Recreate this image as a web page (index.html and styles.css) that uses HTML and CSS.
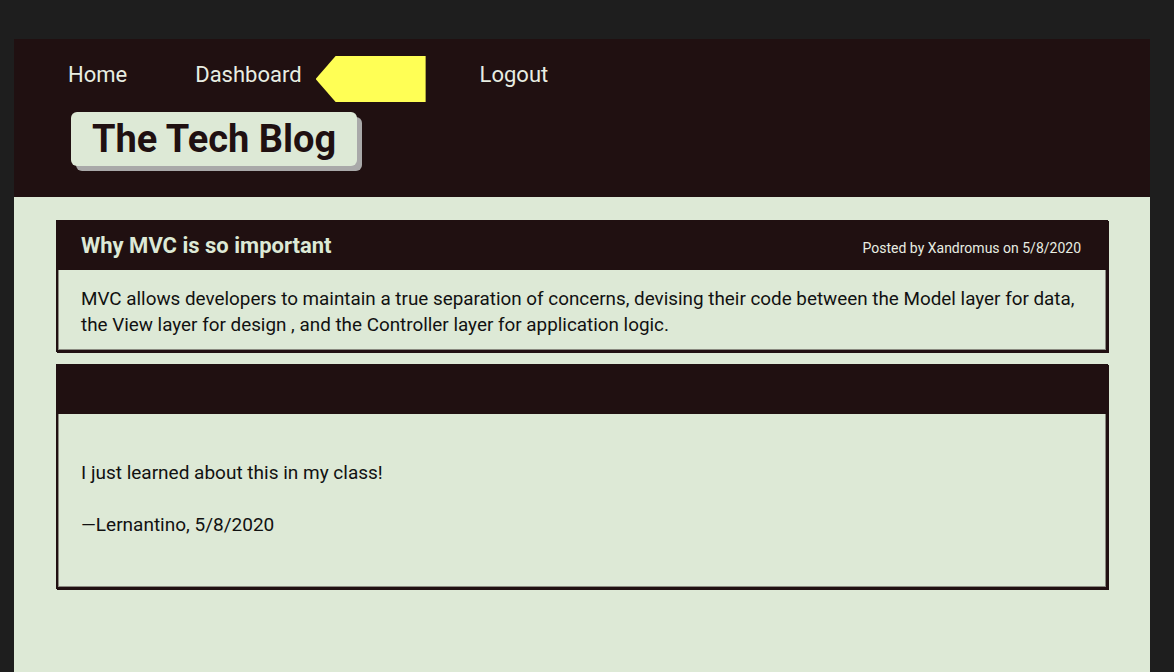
FILE: index.html
```html
<!DOCTYPE html>
<html lang="en">
<head>
<meta charset="utf-8">
<title>The Tech Blog</title>
<link rel="stylesheet" href="styles.css">
</head>
<body>
<div class="page">
  <header class="site-header">
    <nav class="nav">
      <a class="nav-link" href="#">Home</a>
      <a class="nav-link" href="#">Dashboard</a>
      <span class="pointer"></span>
      <a class="nav-link logout" href="#">Logout</a>
    </nav>
    <div class="brand-wrap">
      <h1 class="brand">The Tech Blog</h1>
    </div>
  </header>
  <main class="content">
    <article class="card">
      <div class="card-head">
        <h2 class="card-title">Why MVC is so important</h2>
        <span class="card-meta">Posted by Xandromus on 5/8/2020</span>
      </div>
      <div class="card-body">
        <p class="post-text">MVC allows developers to maintain a true separation of concerns, devising their code between the Model layer for data, the View layer for design , and the Controller layer for application logic.</p>
      </div>
    </article>
    <article class="card">
      <div class="card-head"></div>
      <div class="card-body comment-body">
        <p class="comment-text">I just learned about this in my class!</p>
        <p class="comment-text">—Lernantino, 5/8/2020</p>
      </div>
    </article>
  </main>
</div>
</body>
</html>
```
FILE: styles.css
```css
* { box-sizing: border-box; }
html, body {
  margin: 0;
  padding: 0;
  background: #1e1e1e;
  font-family: Roboto, "Liberation Sans", sans-serif;
}
.page {
  margin: 39px 0 0 14px;
  width: 1136px;
  min-height: 633px;
  background: #dde9d6;
}
.site-header {
  background: #201011;
  height: 158px;
  padding: 17px 0 0 54px;
}
.nav {
  display: flex;
  align-items: flex-start;
  height: 46px;
}
.nav-link {
  color: #e8ede2;
  text-decoration: none;
  font-size: 22px;
  line-height: 26px;
  margin-top: 6px;
}
.nav-link + .nav-link { margin-left: 68px; }
.pointer {
  width: 110px;
  height: 46px;
  margin-left: 14px;
  margin-right: 54px;
  background: #ffff55;
  clip-path: polygon(0 50%, 20px 0, 100% 0, 100% 100%, 20px 100%);
  filter: drop-shadow(2px 2px 0 #000);
}
.nav-link.logout { margin-left: 0; }
.brand-wrap {
  margin-top: 10px;
  padding-left: 3px;
}
.brand {
  display: inline-block;
  margin: 0;
  background: #dde9d6;
  color: #201011;
  font-size: 38px;
  font-weight: 700;
  line-height: 54px;
  height: 54px;
  padding: 0 21px;
  border-radius: 6px;
  box-shadow: 5px 5px 0 #a9a9a9;
}
.content {
  padding: 23px 42px 40px;
  display: flex;
  flex-direction: column;
  gap: 12px;
}
.card {
  border: 2px solid #201011;
  box-shadow: 1px 1px 0 #201011;
  background: #dde9d6;
}
.card-head {
  background: #201011;
  height: 48px;
  display: flex;
  align-items: center;
  justify-content: space-between;
  padding: 0 25px 0 23px;
}
.card-title {
  margin: 0 0 2px;
  color: #dde9d6;
  font-size: 22px;
  font-weight: 700;
}
.card-meta {
  color: #e8ede2;
  font-size: 14px;
  padding-top: 3px;
}
.card-body {
  padding: 16px 18px 11px 22px;
  border-left: 1px solid #8a8a80;
  border-right: 1px solid #8a8a80;
  border-bottom: 1px solid #8a8a80;
}
.post-text {
  margin: 0;
  font-size: 18.85px;
  line-height: 26px;
  color: #111;
}
.comment-body {
  padding: 20px 22px 22px;
}
.comment-text {
  margin: 26px 0;
  font-size: 19px;
  line-height: 26px;
  color: #111;
}
```
